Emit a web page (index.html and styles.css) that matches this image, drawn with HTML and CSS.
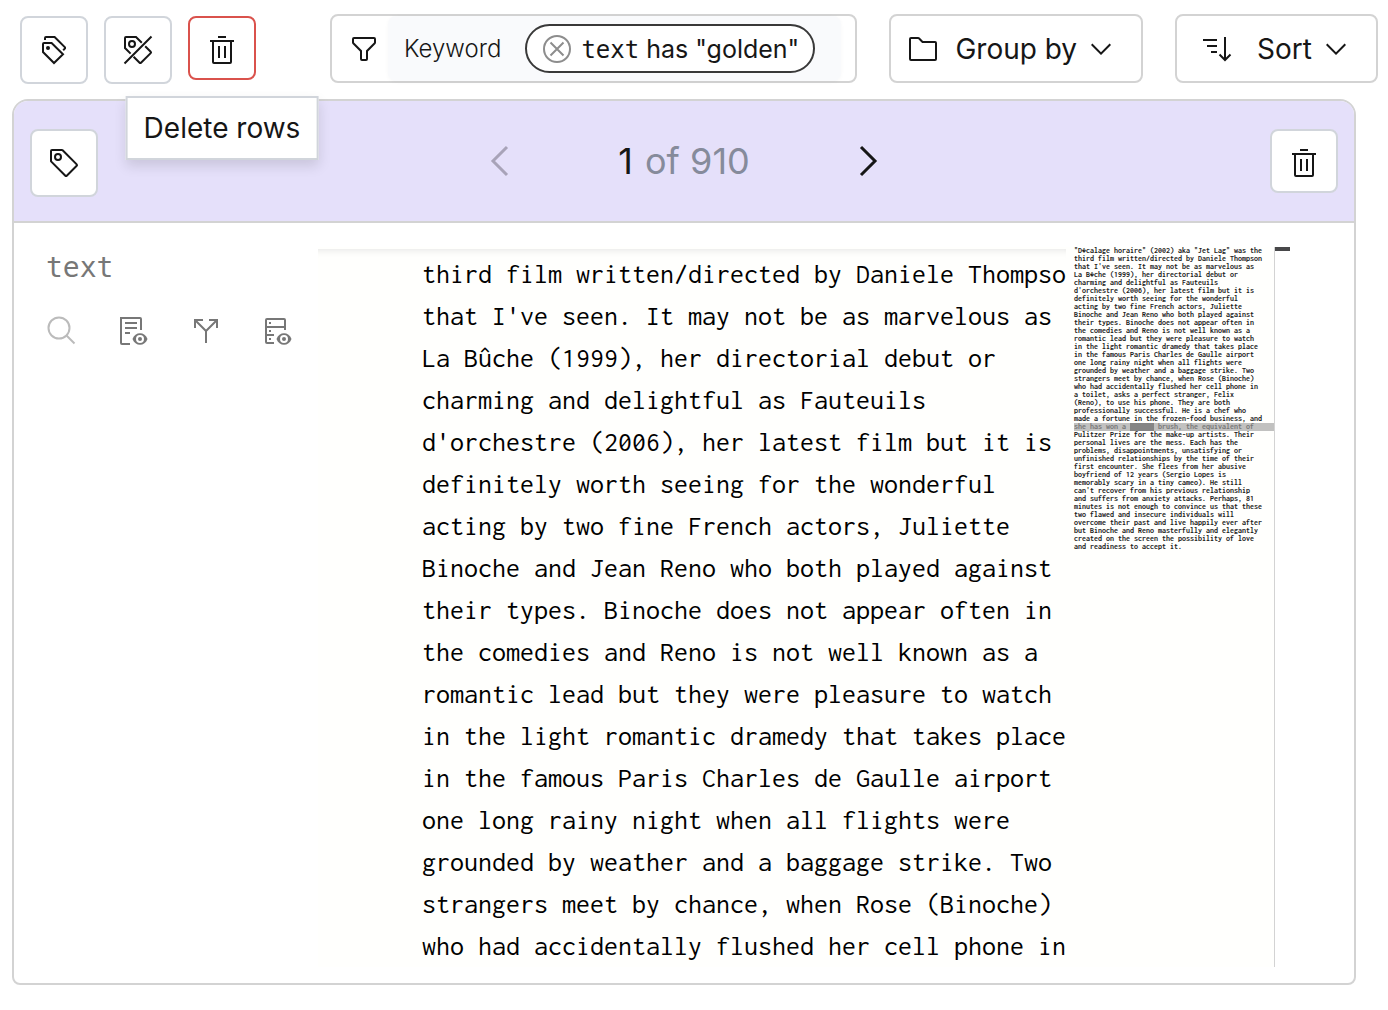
FILE: index.html
```html
<!DOCTYPE html>
<html lang="en">
<head>
<meta charset="utf-8">
<meta name="viewport" content="width=device-width, initial-scale=1">
<title>Dataset rows</title>
<link rel="stylesheet" href="styles.css">
</head>
<body>
<svg class="sprite" aria-hidden="true">
  <symbol id="tag" viewBox="0 0 32 32"><path d="M10,14a4,4,0,1,1,4-4A4,4,0,0,1,10,14Zm0-6a2,2,0,1,0,2,2A2,2,0,0,0,10,8Z"/><path d="M16.6436,29.4145,2.5858,15.3555A2,2,0,0,1,2,13.9414V4A2,2,0,0,1,4,2h9.9413a2,2,0,0,1,1.4142.5858L29.4144,16.6436a2.0005,2.0005,0,0,1,0,2.8285l-9.9424,9.9424a2.0005,2.0005,0,0,1-2.8285,0ZM4,4v9.9417L18.0578,28,28,18.0581,13.9416,4Z"/></symbol>
  <symbol id="trash" viewBox="0 0 32 32"><path d="M12 12H14V24H12zM18 12H20V24H18zM4 6V8H6V28a2 2 0 0 0 2 2H24a2 2 0 0 0 2-2V8h2V6zM8 28V8H24V28zM12 2H20V4H12z"/></symbol>
  <symbol id="chevron" viewBox="0 0 32 32"><path d="M16 22 6 12 7.4 10.6 16 19.2 24.6 10.6 26 12z"/></symbol>
</svg>

<header class="toolbar">
  <div class="actions">
    <button class="icon-button" type="button" aria-label="Add label to rows">
      <svg class="icon line" viewBox="0 0 32 32"><path d="M7 6V4a1 1 0 0 1 1-1h8.600L27 13.400v1L25.200 16.200M6 9h7.600L25 20.200 16 29 5 18v-8a1 1 0 0 1 1-1z"/><circle class="dot" cx="10" cy="14" r="2"/></svg>
    </button>
    <button class="icon-button" type="button" aria-label="Remove label from rows">
      <svg class="icon line" viewBox="0 0 32 32"><path d="M29.500 2.500 2.500 29.500M8.600 19.600 3 14V4a1 1 0 0 1 1-1h10l5.800 5.800M23.200 12.200 28.700 17.700a1 1 0 0 1 0 1.400L19 28.700a1 1 0 0 1-1.400 0L11.600 22.800"/><circle cx="10" cy="10" r="3"/></svg>
    </button>
    <div class="tip-anchor">
      <button class="icon-button short danger" type="button" aria-label="Delete" aria-describedby="delete-tip"><svg class="icon"><use href="#trash"/></svg></button>
      <div class="tooltip" id="delete-tip" role="tooltip">Delete rows</div>
    </div>
  </div>

  <div class="filter box">
    <button class="plain" type="button" aria-label="Filter"><svg class="icon" viewBox="0 0 32 32"><path d="M18 28H14a2 2 0 0 1-2-2V18.410L4.590 11A2 2 0 0 1 4 9.590V6A2 2 0 0 1 6 4H26a2 2 0 0 1 2 2V9.590A2 2 0 0 1 27.410 11L20 18.410V26A2 2 0 0 1 18 28ZM6 6V9.590l8 8V26h4V17.590l8-8V6Z"/></svg></button>
    <div class="keyword">
      <span class="keyword-name">Keyword</span>
      <div class="pill">
        <button class="plain remove" type="button" aria-label="Remove filter"><svg class="icon line" viewBox="0 0 32 32"><circle cx="16" cy="16" r="13"/><path d="m9.500 9.500 13 13m0-13-13 13"/></svg></button>
        <span><code>text</code> has "golden"</span>
      </div>
    </div>
  </div>

  <button class="box menu" type="button">
    <svg class="icon" viewBox="0 0 32 32"><path d="M11.170,6l3.420,3.410.580.590H28V26H4V6h7.170m0-2H4A2,2,0,0,0,2,6V26a2,2,0,0,0,2,2H28a2,2,0,0,0,2-2V10a2,2,0,0,0-2-2H16L12.590,4.590A2,2,0,0,0,11.170,4Z"/></svg>
    <span>Group by</span>
    <svg class="icon caret"><use href="#chevron"/></svg>
  </button>
  <button class="box menu sort" type="button">
    <svg class="icon line" viewBox="0 0 32 32"><path d="M2 7h14M6 13h10M10 19h6M24 4v23M18.500 21.500 24 27l5.500-5.500"/></svg>
    <span>Sort</span>
    <svg class="icon caret"><use href="#chevron"/></svg>
  </button>
</header>

<main class="panel">
  <div class="panel-head">
    <button class="icon-button" type="button" aria-label="Label row"><svg class="icon"><use href="#tag"/></svg></button>
    <nav class="pager" aria-label="Rows">
      <button class="plain" type="button" aria-label="Previous row" disabled><svg class="arrow" viewBox="0 0 48 48"><path d="M30 10 16 24l14 14"/></svg></button>
      <span class="count"><b>1</b> of 910</span>
      <button class="plain" type="button" aria-label="Next row"><svg class="arrow" viewBox="0 0 48 48"><path d="m18 10 14 14-14 14"/></svg></button>
    </nav>
    <button class="icon-button short" type="button" aria-label="Delete row"><svg class="icon"><use href="#trash"/></svg></button>
  </div>

  <div class="panel-body">
    <aside class="field">
      <h2 class="field-name">text</h2>
      <div class="field-tools">
        <button class="plain" type="button" aria-label="Search" disabled><svg class="icon line" viewBox="0 0 32 32"><circle cx="13" cy="13" r="10.500"/><path d="m20.500 20.500 8 8"/></svg></button>
        <button class="plain" type="button" aria-label="Preview text"><svg class="icon line" viewBox="0 0 32 32"><path d="M12 29H4a1 1 0 0 1-1-1V3h19a1 1 0 0 1 1 1v11M7 8h12M7 13h12M7 18h5"/><path class="eye" d="M14.500 24C17 16.300 27 16.300 29.500 24 27 31.700 17 31.700 14.500 24z"/><circle class="iris" cx="22" cy="24" r="3"/></svg></button>
        <button class="plain" type="button" aria-label="Compare"><svg class="icon line" viewBox="0 0 32 32"><path d="M16 28V16L5 5M16 16 27 5M5 13V5h8M19 5h8v8"/></svg></button>
        <button class="plain" type="button" aria-label="Preview data"><svg class="icon line" viewBox="0 0 32 32"><path d="M12 28H5a1 1 0 0 1-1-1V5a1 1 0 0 1 1-1h17a1 1 0 0 1 1 1v10M4 12h19M4 20h8M7 8h2M7 16h2M7 24h2"/><path class="eye" d="M14.500 24C17 16.300 27 16.300 29.500 24 27 31.700 17 31.700 14.500 24z"/><circle class="iris" cx="22" cy="24" r="3"/></svg></button>
      </div>
    </aside>

    <section class="editor" aria-label="Row text">
      <div class="code"><pre>third film written/directed by Daniele Thompson
that I've seen. It may not be as marvelous as
La Bûche (1999), her directorial debut or
charming and delightful as Fauteuils
d'orchestre (2006), her latest film but it is
definitely worth seeing for the wonderful
acting by two fine French actors, Juliette
Binoche and Jean Reno who both played against
their types. Binoche does not appear often in
the comedies and Reno is not well known as a
romantic lead but they were pleasure to watch
in the light romantic dramedy that takes place
in the famous Paris Charles de Gaulle airport
one long rainy night when all flights were
grounded by weather and a baggage strike. Two
strangers meet by chance, when Rose (Binoche)
who had accidentally flushed her cell phone in</pre></div>
      <div class="minimap" aria-hidden="true"><pre>"D�calage horaire" (2002) aka "Jet Lag" was the
third film written/directed by Daniele Thompson
that I've seen. It may not be as marvelous as
La B�che (1999), her directorial debut or
charming and delightful as Fauteuils
d'orchestre (2006), her latest film but it is
definitely worth seeing for the wonderful
acting by two fine French actors, Juliette
Binoche and Jean Reno who both played against
their types. Binoche does not appear often in
the comedies and Reno is not well known as a
romantic lead but they were pleasure to watch
in the light romantic dramedy that takes place
in the famous Paris Charles de Gaulle airport
one long rainy night when all flights were
grounded by weather and a baggage strike. Two
strangers meet by chance, when Rose (Binoche)
who had accidentally flushed her cell phone in
a toilet, asks a perfect stranger, Felix
(Reno), to use his phone. They are both
professionally successful. He is a chef who
made a fortune in the frozen-food business, and
<span class="match-line">she has won a <mark>golden</mark> brush, the equivalent of</span>
Pulitzer Prize for the make-up artists. Their
personal lives are the mess. Each has the
problems, disappointments, unsatisfying or
unfinished relationships by the time of their
first encounter. She flees from her abusive
boyfriend of 12 years (Sergio Lopes is
memorably scary in a tiny cameo). He still
can't recover from his previous relationship
and suffers from anxiety attacks. Perhaps, 81
minutes is not enough to convince us that these
two flawed and insecure individuals will
overcome their past and live happily ever after
but Binoche and Reno masterfully and elegantly
created on the screen the possibility of love
and readiness to accept it.</pre></div>
      <div class="ruler"></div>
    </section>
  </div>
</main>
</body>
</html>
```
FILE: styles.css
```css
* { box-sizing: border-box; }

body {
  margin: 0;
  background: #fff;
  color: #161616;
  font-family: Inter, "Liberation Sans", sans-serif;
  font-size: 28px;
}

button {
  color: inherit;
  font: inherit;
}

pre, h2 {
  margin: 0;
  font: inherit;
}

.sprite { display: none; }

.icon {
  display: block;
  flex: none;
  width: 32px;
  height: 32px;
  fill: currentColor;
}

.line {
  fill: none;
  stroke: currentColor;
  stroke-width: 2;
}

.dot, .eye {
  fill: currentColor;
  stroke: none;
}

.iris {
  fill: currentColor;
  stroke: #fff;
}

.plain {
  display: block;
  padding: 0;
  border: 0;
  background: none;
}

/* Toolbar */

.toolbar {
  display: flex;
  align-items: flex-start;
  gap: 32px;
  padding: 14px 10px 0 20px;
}

.actions {
  display: flex;
  gap: 16px;
  padding: 2px 42px 0 0;
}

.icon-button {
  display: flex;
  flex: none;
  width: 68px;
  height: 68px;
  padding: 16px;
  border: 2px solid #d1d5db;
  border-radius: 8px;
  background: #fff;
}

.short { height: 64px; }
.danger { border-color: #da524c; }
.tip-anchor { position: relative; }

.tooltip {
  position: absolute;
  z-index: 1;
  top: 80px;
  left: 50%;
  padding: 10px 16px;
  border: 2px solid #d1d5db;
  background: #fff;
  box-shadow: 0 6px 12px rgba(0, 0, 0, 0.12);
  line-height: 40px;
  white-space: nowrap;
  transform: translateX(-50%);
}

.box {
  display: flex;
  align-items: center;
  height: 69px;
  border: 2px solid #d3d3d3;
  border-radius: 8px;
  background: #fff;
}

.filter {
  flex: 1;
  gap: 8px;
  padding: 0 14px 0 16px;
}

.keyword {
  display: flex;
  flex: 1;
  align-items: center;
  gap: 24px;
  height: 100%;
  padding-left: 16px;
  border-radius: 8px;
  background: #f9fafc;
  box-shadow: 0 1px 4px rgba(0, 0, 0, 0.03);
  font-size: 24px;
  white-space: nowrap;
}

.keyword-name { font-weight: 300; }

.pill {
  display: flex;
  align-items: center;
  gap: 8px;
  height: 49px;
  padding: 0 14px;
  border: 2px solid #393939;
  border-radius: 25px;
  background: #fff;
  font-size: 25px;
}

.remove { color: #8d8d8d; }
.pill code { font: 24px "DejaVu Sans Mono", monospace; }

.menu {
  gap: 16px;
  padding: 0 24px 0 16px;
  white-space: nowrap;
}

.sort {
  gap: 24px;
  padding-left: 24px;
}

.menu .caret { margin-left: -8px; }
.sort .caret { margin-left: -16px; }

/* Row panel */

.panel {
  margin: 15px 32px 25px 12px;
  border: 2px solid #d3d3d3;
  border-radius: 16px 16px 8px 8px;
}

.panel-head {
  display: flex;
  align-items: flex-start;
  justify-content: space-between;
  height: 122px;
  padding: 28px 16px 0;
  border-bottom: 2px solid #d3d3d3;
  border-radius: 14px 14px 0 0;
  background: #e5e0fa;
}

.pager {
  display: flex;
  align-items: center;
  justify-content: space-between;
  width: 414px;
  height: 64px;
}

.pager .plain:disabled { color: #a8a3b8; }

.arrow {
  display: block;
  width: 48px;
  height: 48px;
  fill: none;
  stroke: currentColor;
  stroke-width: 3;
}

.count {
  color: #868b9b;
  font-size: 36px;
}

.count b {
  margin-right: 2px;
  color: #161616;
  font-weight: 400;
}

.panel-body {
  display: flex;
  padding: 24px 64px 16px 0;
}

.field {
  flex: none;
  width: 304px;
  padding-left: 32px;
  color: #777;
}

.field-name {
  font: 28px/42px "DejaVu Sans Mono", monospace;
}

.field-tools {
  display: flex;
  gap: 40px;
  padding-top: 26px;
}

.field-tools .plain:disabled { color: #bbb; }

/* Text viewer */

.editor {
  display: flex;
  flex: 1;
  min-width: 0;
  height: 720px;
  background: #fffffd;
  color: #000;
  font-family: Inconsolata, "Noto Sans Mono CJK SC", "Liberation Mono", monospace;
}

.code {
  flex: 1;
  min-width: 0;
  margin-top: 2px;
  padding: 4px 0 0 104px;
  overflow: hidden;
  box-shadow: inset 0 8px 8px -8px #ddd;
  font-size: 28px;
  line-height: 42px;
}

.minimap {
  flex: none;
  width: 208px;
  padding-left: 8px;
  overflow: hidden;
  color: #222;
  font-size: 8px;
  font-weight: 700;
  line-height: 8px;
}

.match-line {
  display: inline-block;
  width: 200px;
  background: #c1c1c0;
  color: #777;
}

.match-line mark {
  display: inline-block;
  background: #858585;
  color: #858585;
}

.ruler {
  flex: none;
  width: 16px;
  border-left: 1px solid #d3d3d3;
  background: linear-gradient(#48484a 4px, #fff 4px);
}
```
